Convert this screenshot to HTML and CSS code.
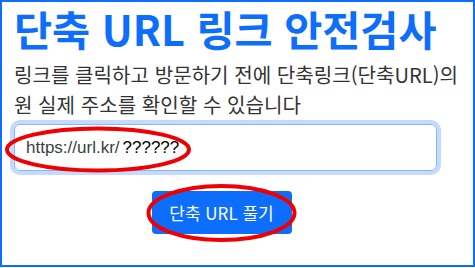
FILE: index.html
```html
<!DOCTYPE html>
<html lang="ko">
<head>
<meta charset="utf-8">
<link rel="stylesheet" href="styles.css">
</head>
<body>
<div class="frame">
  <h1 class="title">단축 URL 링크 안전검사</h1>
  <p class="lead">링크를 클릭하고 방문하기 전에 단축링크(단축URL)의 원 실제 주소를 확인할 수 있습니다</p>
  <div class="field">
    <div class="input"><span class="url">https://url.kr/</span><span class="q">??????</span></div>
  </div>
  <div class="actions">
    <button class="btn">단축 URL 풀기</button>
  </div>
  <svg class="marks" width="475" height="268" viewBox="0 0 475 268">
    <ellipse cx="98" cy="149.5" rx="91" ry="21" fill="none" stroke="#f00000" stroke-width="4"/>
    <ellipse cx="221.5" cy="213" rx="73" ry="27" fill="none" stroke="#f00000" stroke-width="4"/>
  </svg>
</div>
</body>
</html>
```
FILE: styles.css
```css
html, body {
  margin: 0;
  padding: 0;
  background: #fff;
}
.frame {
  position: relative;
  width: 475px;
  height: 267px;
  box-sizing: border-box;
  border: 2px solid #0d6efd;
  padding: 0 12px;
  font-family: "Noto Sans CJK KR", "Noto Sans", sans-serif;
  color: #212529;
}
.title {
  margin: -4px 0 0 0;
  padding: 0;
  font-size: 41.4px;
  line-height: 60px;
  font-weight: 700;
  color: #0d6efd;
  letter-spacing: 0;
  white-space: nowrap;
}
.lead {
  margin: 2px 0 0 0;
  font-size: 20.1px;
  line-height: 30px;
  font-weight: 400;
  color: #333;
}
.field {
  margin-top: 4px;
  padding: 0 24px 0 0;
}
.input {
  height: 47px;
  box-sizing: border-box;
  border: 1px solid #86b7fe;
  border-radius: 6px;
  box-shadow: 0 0 0 4px rgba(13,110,253,.25);
  padding: 0 11px;
  display: flex;
  align-items: center;
  font-family: "Liberation Sans", sans-serif;
  font-size: 17px;
}
.url { color: #3a3f44; }
.q { color: #000; margin-left: 3px; }
.actions {
  display: flex;
  justify-content: center;
  margin-top: 20px;
  padding-right: 32px;
}
.btn {
  width: 140px;
  height: 43px;
  border: 0;
  border-radius: 4px;
  background: #0d6efd;
  color: #fff;
  font-family: "Noto Sans CJK KR", "Noto Sans", sans-serif;
  font-size: 17px;
  padding: 0;
}
.marks {
  position: absolute;
  left: -2px;
  top: -2px;
  pointer-events: none;
}
```
